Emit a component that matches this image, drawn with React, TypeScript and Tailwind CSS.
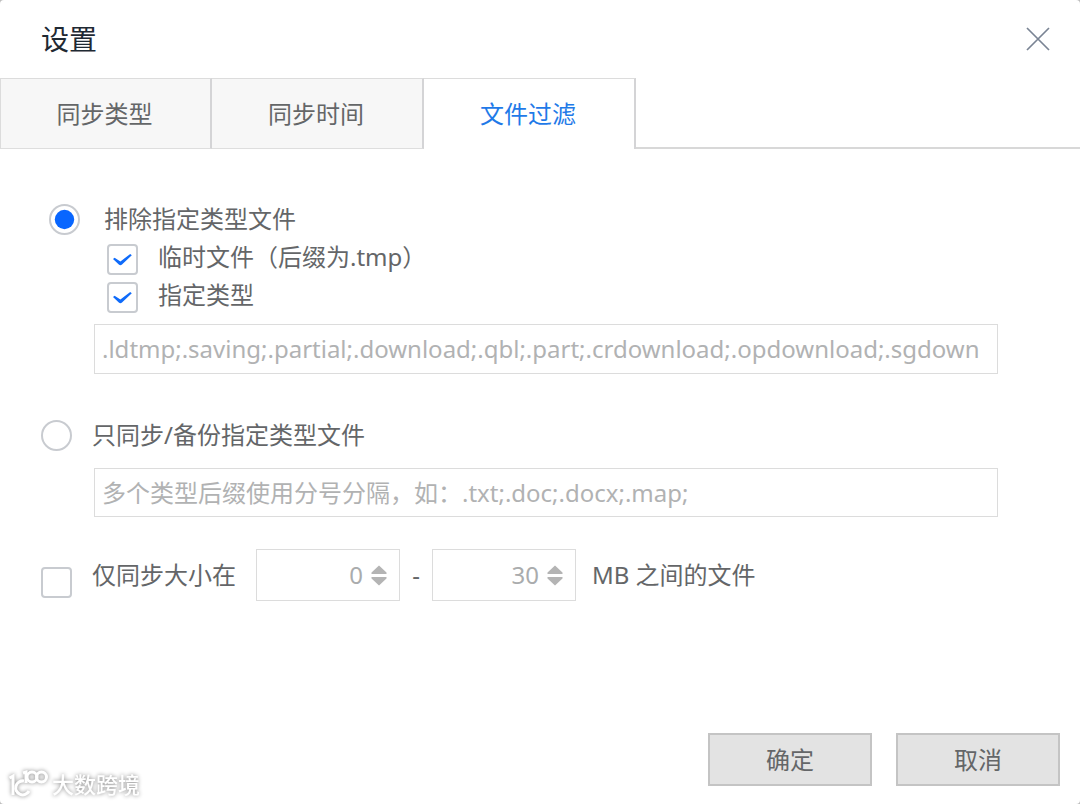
import React, { useState } from 'react';
import clsx from 'clsx';

const TABS = ['同步类型', '同步时间', '文件过滤'];

const BOX_CLASS =
    'peer block size-[31px] appearance-none border-2 border-[#c8cbd0] bg-white focus:outline-none';

interface CheckboxProps {
    id: string;
    defaultChecked?: boolean;
}

const Checkbox: React.FC<CheckboxProps> = ({ id, defaultChecked }) => (
    <span className="relative block shrink-0">
        <input id={id} type="checkbox" defaultChecked={defaultChecked} className={clsx(BOX_CLASS, 'rounded-sm')} />
        <svg
            viewBox="0 0 31 31"
            className="pointer-events-none absolute inset-0 hidden size-[31px] peer-checked:block"
            fill="#0f6bfa"
        >
            <path d="M6 15 L7.6 13.7 L13.4 17.6 L23.2 10 L24.8 11.3 L15 20.6 Q13.4 22 11.8 20.6 Z" />
        </svg>
    </span>
);

interface RadioProps {
    id: string;
    checked: boolean;
    onChange: () => void;
}

const Radio: React.FC<RadioProps> = ({ id, checked, onChange }) => (
    <span className="relative block shrink-0">
        <input
            id={id}
            type="radio"
            name="filter-mode"
            checked={checked}
            onChange={onChange}
            className={clsx(BOX_CLASS, 'rounded-full')}
        />
        <svg
            viewBox="0 0 31 31"
            className="pointer-events-none absolute inset-0 hidden size-[31px] peer-checked:block"
            fill="#0866ff"
        >
            <circle cx="15.5" cy="15.5" r="9.7" />
        </svg>
    </span>
);

interface SizeInputProps {
    label: string;
    initial: number;
}

const SizeInput: React.FC<SizeInputProps> = ({ label, initial }) => {
    const [value, setValue] = useState(String(initial));
    const step = (delta: number) => setValue(String(Math.max(0, (Number(value) || 0) + delta)));

    return (
        <div className="flex h-[52px] w-36 items-center border border-[#dcdcdc] pr-3">
            <input
                type="text"
                inputMode="numeric"
                aria-label={label}
                value={value}
                onChange={(e) => setValue(e.target.value.replace(/\D/g, ''))}
                className="min-w-0 flex-1 text-right text-[#aaacad] focus:outline-none"
            />
            <div className="ml-2 flex flex-col gap-[3px]">
                <button type="button" aria-label="增加" onClick={() => step(1)}>
                    <svg width="16" height="9" viewBox="0 0 16 9" fill="#b4b4b4" className="block">
                        <path d="M8 0.5 L15.5 7.5 V9 H0.5 V7.5 Z" />
                    </svg>
                </button>
                <button type="button" aria-label="减少" onClick={() => step(-1)}>
                    <svg width="16" height="9" viewBox="0 0 16 9" fill="#b4b4b4" className="block">
                        <path d="M8 8.5 L15.5 1.5 V0 H0.5 V1.5 Z" />
                    </svg>
                </button>
            </div>
        </div>
    );
};

const Watermark = () => (
    <div className="pointer-events-none absolute bottom-1 left-2 flex items-center gap-1 text-white drop-shadow-[0_0_2px_#888]">
        <svg width="40" height="30" viewBox="0 0 40 30" fill="none" stroke="#fff" strokeWidth="3">
            <path d="M1.5 9 L5 7 V26" />
            <path d="M16 12 A7 7 0 1 0 21 22" />
            <path d="M15 4 L18 3 V14" />
            <circle cx="24" cy="8" r="5" />
            <circle cx="33.5" cy="8" r="5" />
        </svg>
        <span className="text-[22px] leading-8 font-medium">大数跨境</span>
    </div>
);

export default function App() {
    const [activeTab, setActiveTab] = useState(2);
    const [mode, setMode] = useState<'exclude' | 'include'>('exclude');

    return (
        <div className="bg-[#bdbdbd]">
            <div className="relative flex min-h-screen flex-col rounded-sm bg-white font-['Noto_Sans','Noto_Sans_CJK_SC',sans-serif] text-2xl text-[#646668]">
                <header className="flex h-[78px] items-center justify-between pr-7 pl-[41px]">
                    <h1 className="text-[28px] leading-9 text-[#1f2933]">设置</h1>
                    <button type="button" aria-label="关闭">
                        <svg width="28" height="28" viewBox="0 0 28 28" stroke="#7a8494" strokeWidth="1.7">
                            <path d="M3 3 L25 25 M25 3 L3 25" />
                        </svg>
                    </button>
                </header>

                <div role="tablist" className="flex h-[71px]">
                    {TABS.map((tab, i) => (
                        <button
                            key={tab}
                            type="button"
                            role="tab"
                            aria-selected={i === activeTab}
                            onClick={() => setActiveTab(i)}
                            className={clsx(
                                'w-[212px] border-t border-r-2 border-t-[#dcdcdc] border-r-[#d4d4d6] pr-[2px]',
                                i === 0 && 'border-l border-l-[#dcdcdc]',
                                i === activeTab ? 'bg-white text-[#1f7ae8]' : 'border-b border-b-[#dedede] bg-[#f7f7f7]'
                            )}
                        >
                            {tab}
                        </button>
                    ))}
                    <div className="flex-1 border-b-2 border-[#d8d8d8]" />
                </div>

                <main className="flex flex-col pt-[51px] pr-[82px] pb-8 pl-[41px]">
                    <div className="flex h-[38px] items-center gap-6 pl-2">
                        <Radio id="exclude" checked={mode === 'exclude'} onChange={() => setMode('exclude')} />
                        <label htmlFor="exclude">排除指定类型文件</label>
                    </div>
                    <div className="flex h-[38px] items-center gap-5 pl-[66px]">
                        <div className="pt-1">
                            <Checkbox id="tmp-files" defaultChecked />
                        </div>
                        <label htmlFor="tmp-files">临时文件（后缀为.tmp）</label>
                    </div>
                    <div className="flex h-[38px] items-center gap-5 pl-[66px]">
                        <div className="pt-1">
                            <Checkbox id="custom-types" defaultChecked />
                        </div>
                        <label htmlFor="custom-types">指定类型</label>
                    </div>
                    <div className="mt-[10px] ml-[53px] flex h-[50px] border border-[#dcdcdc] px-[7px]">
                        <input
                            type="text"
                            aria-label="排除的文件类型"
                            defaultValue=".ldtmp;.saving;.partial;.download;.qbl;.part;.crdownload;.opdownload;.sgdown"
                            className="min-w-0 flex-1 text-[#b1b2b3] focus:outline-none"
                        />
                    </div>

                    <div className="mt-[42px] flex h-[38px] items-center gap-5">
                        <Radio id="include" checked={mode === 'include'} onChange={() => setMode('include')} />
                        <label htmlFor="include">只同步/备份指定类型文件</label>
                    </div>
                    <div className="mt-[14px] ml-[53px] flex h-[49px] border border-[#dcdcdc] px-[7px]">
                        <input
                            type="text"
                            aria-label="同步的文件类型"
                            placeholder="多个类型后缀使用分号分隔，如：.txt;.doc;.docx;.map;"
                            className="min-w-0 flex-1 placeholder:text-[#b1b2b3] focus:outline-none"
                        />
                    </div>

                    <div className="mt-8 flex items-center">
                        <div className="pt-[14px]">
                            <Checkbox id="size-limit" />
                        </div>
                        <label htmlFor="size-limit" className="mr-5 ml-5">
                            仅同步大小在
                        </label>
                        <SizeInput label="最小大小" initial={0} />
                        <span className="w-8 text-center">-</span>
                        <SizeInput label="最大大小" initial={30} />
                        <span className="ml-4">MB 之间的文件</span>
                    </div>
                </main>

                <footer className="mt-auto flex justify-end gap-6 pr-5 pb-[18px]">
                    <button type="button" className="h-[53px] w-[164px] border-2 border-[#c4c4c4] bg-[#e3e3e3]">
                        确定
                    </button>
                    <button type="button" className="h-[53px] w-[164px] border-2 border-[#c4c4c4] bg-[#e3e3e3]">
                        取消
                    </button>
                </footer>

                <Watermark />
            </div>
        </div>
    );
}
